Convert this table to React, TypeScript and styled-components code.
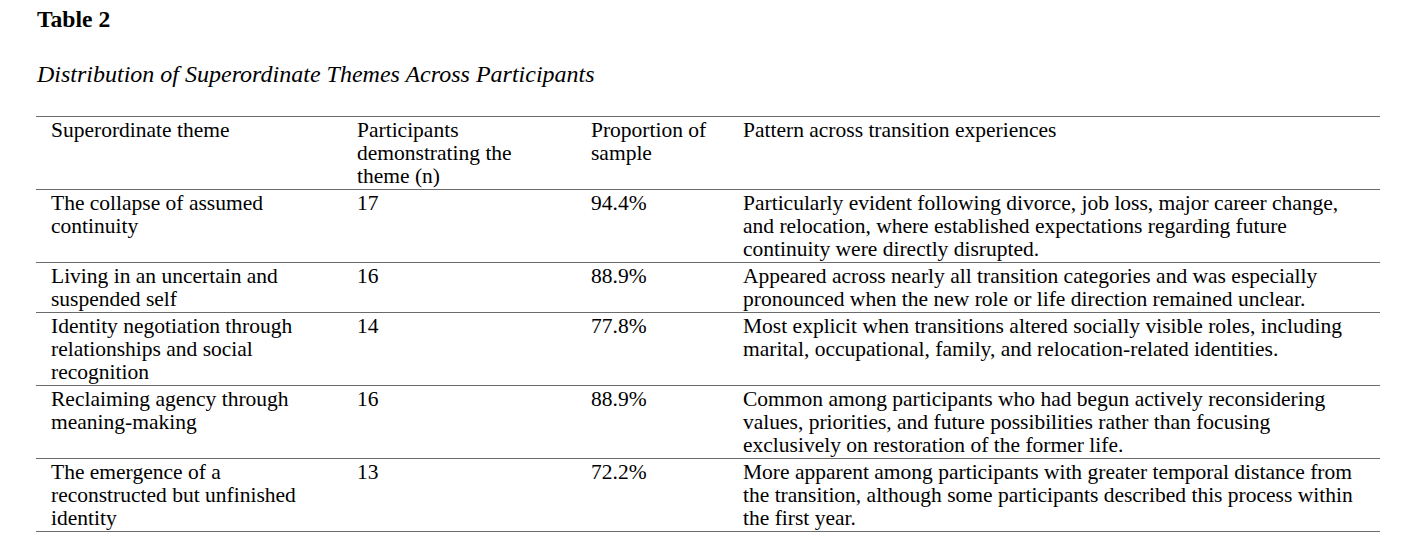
import React from "react";
import styled, { createGlobalStyle } from "styled-components";

const GlobalStyle = createGlobalStyle`
  html, body {
    margin: 0;
    padding: 0;
    background: #ffffff;
  }
  body {
    font-family: "Liberation Serif", "Times New Roman", serif;
    color: #000000;
  }
`;

const Page = styled.div`
  width: 1405px;
  height: 553px;
  box-sizing: border-box;
  padding: 6px 0 0 36px;
  background: #ffffff;
`;

const Heading = styled.h1`
  margin: 0;
  font-size: 23.6px;
  line-height: 26px;
  font-weight: bold;
  padding-left: 1px;
`;

const Caption = styled.p`
  margin: 29px 0 0 0;
  font-size: 24px;
  line-height: 26px;
  font-style: italic;
  padding-left: 1px;
`;

const Table = styled.table`
  margin-top: 29px;
  width: 1344px;
  border-collapse: collapse;
  table-layout: fixed;
  font-size: 21.5px;
  line-height: 23px;
  border-top: 1px solid #6b6b6b;
`;

const Col = styled.col<{ $w: number }>`
  width: ${(p) => p.$w}px;
`;

const HeadCell = styled.th`
  text-align: left;
  font-weight: normal;
  vertical-align: top;
  padding: 2px 15px 1px 15px;
  border-bottom: 1px solid #6b6b6b;
`;

const Cell = styled.td`
  vertical-align: top;
  padding: 2px 15px 1px 15px;
  border-bottom: 1px solid #6b6b6b;
`;

const rows = [
  {
    theme: "The collapse of assumed continuity",
    n: "17",
    pct: "94.4%",
    pattern:
      "Particularly evident following divorce, job loss, major career change, and relocation, where established expectations regarding future continuity were directly disrupted.",
  },
  {
    theme: "Living in an uncertain and suspended self",
    n: "16",
    pct: "88.9%",
    pattern:
      "Appeared across nearly all transition categories and was especially pronounced when the new role or life direction remained unclear.",
  },
  {
    theme: "Identity negotiation through relationships and social recognition",
    n: "14",
    pct: "77.8%",
    pattern:
      "Most explicit when transitions altered socially visible roles, including marital, occupational, family, and relocation-related identities.",
  },
  {
    theme: "Reclaiming agency through meaning-making",
    n: "16",
    pct: "88.9%",
    pattern:
      "Common among participants who had begun actively reconsidering values, priorities, and future possibilities rather than focusing exclusively on restoration of the former life.",
  },
  {
    theme: "The emergence of a reconstructed but unfinished identity",
    n: "13",
    pct: "72.2%",
    pattern:
      "More apparent among participants with greater temporal distance from the transition, although some participants described this process within the first year.",
  },
];

export default function App() {
  return (
    <>
      <GlobalStyle />
      <Page>
        <Heading>Table 2</Heading>
        <Caption>Distribution of Superordinate Themes Across Participants</Caption>
        <Table>
          <colgroup>
            <Col $w={306} />
            <Col $w={234} />
            <Col $w={152} />
            <Col $w={652} />
          </colgroup>
          <thead>
            <tr>
              <HeadCell>Superordinate theme</HeadCell>
              <HeadCell>Participants demonstrating the theme (n)</HeadCell>
              <HeadCell>Proportion of sample</HeadCell>
              <HeadCell>Pattern across transition experiences</HeadCell>
            </tr>
          </thead>
          <tbody>
            {rows.map((r) => (
              <tr key={r.theme}>
                <Cell>{r.theme}</Cell>
                <Cell>{r.n}</Cell>
                <Cell>{r.pct}</Cell>
                <Cell>{r.pattern}</Cell>
              </tr>
            ))}
          </tbody>
        </Table>
      </Page>
    </>
  );
}
